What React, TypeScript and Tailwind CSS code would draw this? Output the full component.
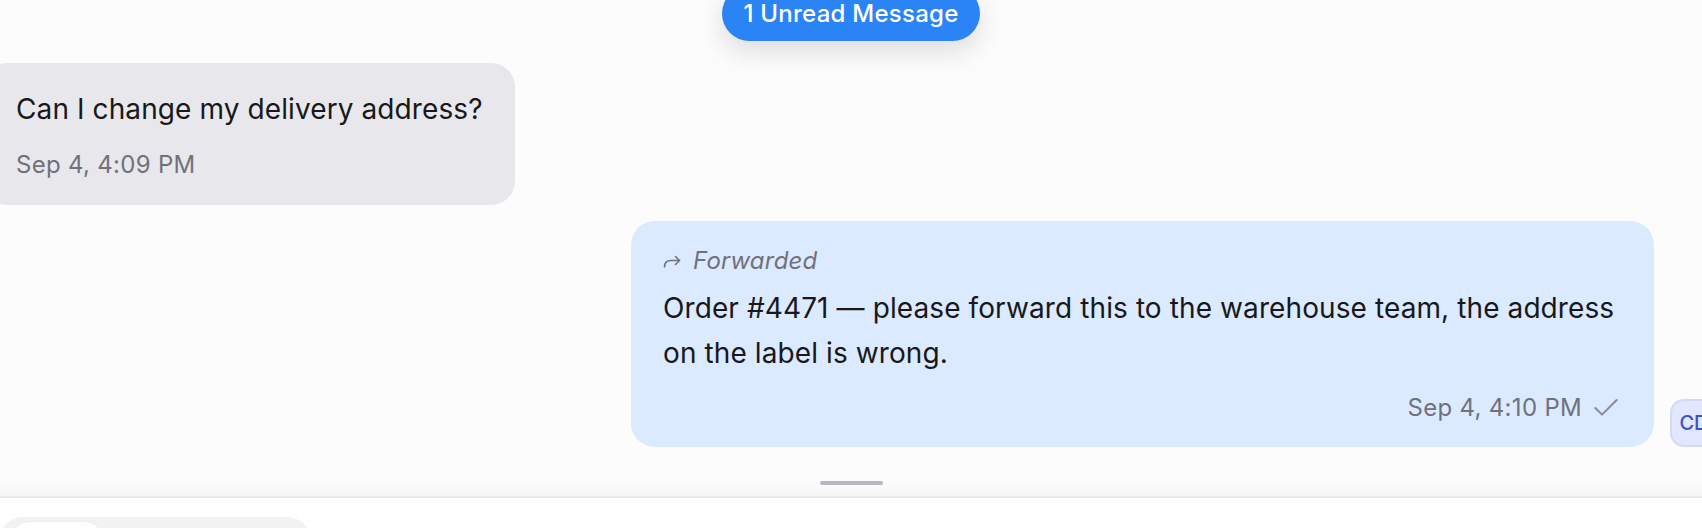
import React from "react";
import { Check } from "lucide-react";

function ForwardIcon() {
  return (
    <svg
      width="18"
      height="14"
      viewBox="0 0 18 14"
      fill="none"
      stroke="currentColor"
      strokeWidth="1.6"
      strokeLinecap="round"
      strokeLinejoin="round"
    >
      <path d="M1.5 13c0-4.2 2.5-6.5 6.5-6.5h8.5" />
      <path d="M12.5 2.5l4 4-4 4" />
    </svg>
  );
}

function App() {
  return (
    <div className="h-[528px] w-[1702px] overflow-hidden bg-white font-['Inter',sans-serif]">
      <div className="-mx-4">
        <div className="bg-[#fcfcfc]">
          <div className="flex justify-center">
            <div className="-mt-[14px] flex h-[55px] items-center rounded-full bg-[#2a84f6] px-[21px] text-[24px] font-medium tracking-[0.25px] text-white shadow-[0_10px_28px_rgba(0,0,0,0.13)]">
              1 Unread Message
            </div>
          </div>

          <div className="mt-[22px] flex flex-col gap-4">
            {/* incoming */}
            <div className="flex">
              <div className="rounded-3xl bg-[#e8e8ec] px-8 py-6">
                <p className="text-[28px] leading-[45.5px] tracking-[0.1px] text-zinc-900">
                  Can I change my delivery address?
                </p>
                <p className="mt-4 text-[24px] leading-8 tracking-[0.3px] text-zinc-500">
                  Sep 4, 4:09 PM
                </p>
              </div>
            </div>

            {/* outgoing */}
            <div className="flex items-end justify-end gap-4">
              <div className="w-[1023px] rounded-3xl bg-blue-100 px-8 pb-[23px] pt-6">
                <div className="flex items-center gap-3 text-zinc-500">
                  <ForwardIcon />
                  <span className="text-[24px] italic leading-8 tracking-[0.2px]">Forwarded</span>
                </div>
                <p className="mt-[9px] text-[28px] leading-[45.5px] tracking-[0.1px] text-zinc-900">
                  Order #4471 — please forward this to the warehouse team, the address on the label is wrong.
                </p>
                <div className="mt-[15px] flex items-center justify-end gap-2 text-zinc-500">
                  <span className="text-[24px] leading-8 tracking-[0.3px]">Sep 4, 4:10 PM</span>
                  <Check size={32} strokeWidth={1.5} className="text-[#8a8a94]" />
                </div>
              </div>
              <div className="flex h-12 w-12 shrink-0 items-center justify-center rounded-[14px] border-2 border-[#d3d9f6] bg-[#e0e7ff] text-[20px] font-medium text-[#4051c6]">
                CD
              </div>
            </div>
          </div>

          <div className="flex h-[49px] flex-col items-center justify-end bg-[linear-gradient(to_bottom,#fcfcfc_70%,#f7f7f7)]">
            <div className="mb-[11px] h-[4px] w-[63px] rounded-full bg-[#b8b8c4]" />
          </div>
        </div>

        <div className="h-[2px] bg-[#e8e8e8]" />

        <div className="bg-white px-4 pt-[19px]">
          <div className="flex w-[310px] rounded-[24px] bg-[#f2f2f2] pl-[10px] pt-[5px]">
            <div className="h-[40px] w-[94px] rounded-[20px] bg-white shadow-sm" />
          </div>
        </div>
      </div>
    </div>
  );
}

export default App;
